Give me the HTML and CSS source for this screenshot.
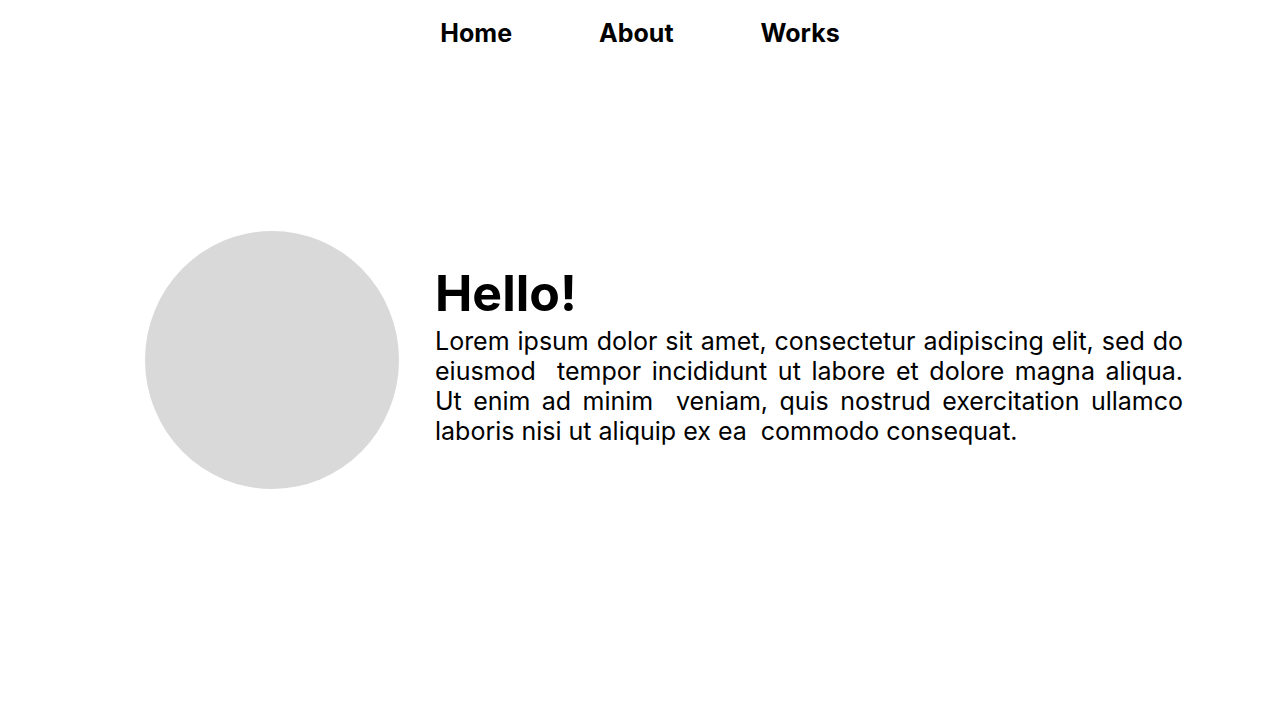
FILE: index.html
```html
<!DOCTYPE html>
<html lang="en">
<head>
<meta charset="utf-8">
<title>Hello</title>
<link rel="stylesheet" href="styles.css">
</head>
<body>
<div class="page">
  <header class="nav">
    <a class="nav-link" href="#">Home</a>
    <a class="nav-link" href="#">About</a>
    <a class="nav-link" href="#">Works</a>
  </header>
  <main class="hero">
    <div class="avatar"></div>
    <div class="intro">
      <h1 class="title">Hello!</h1>
      <p class="lead">Lorem ipsum dolor sit amet, consectetur adipiscing elit, sed do eiusmod  tempor incididunt ut labore et dolore magna aliqua. Ut enim ad minim  veniam, quis nostrud exercitation ullamco laboris nisi ut aliquip ex ea  commodo consequat.</p>
    </div>
  </main>
</div>
</body>
</html>
```
FILE: styles.css
```css
html, body {
  margin: 0;
  padding: 0;
  background: #ffffff;
}

body {
  font-family: Inter, "Noto Sans", sans-serif;
  color: #000000;
}

.page {
  height: 720px;
  display: flex;
  flex-direction: column;
}

.nav {
  height: 66px;
  display: flex;
  justify-content: center;
  align-items: flex-start;
  gap: 87px;
  padding-top: 17px;
  box-sizing: border-box;
}

.nav-link {
  font-size: 25px;
  font-weight: 700;
  color: #000000;
  text-decoration: none;
  line-height: 32px;
}

.hero {
  flex: 1;
  display: flex;
  align-items: center;
  gap: 36px;
  padding: 0 97px 66px 145px;
}

.avatar {
  flex: none;
  width: 254px;
  height: 258px;
  border-radius: 50%;
  background: #d9d9d9;
}

.intro {
  flex: 1;
  padding-bottom: 14px;
}

.title {
  margin: 0;
  font-size: 50px;
  font-weight: 700;
  line-height: 65px;
}

.lead {
  margin: 0;
  font-size: 25px;
  line-height: 30px;
  text-align: justify;
  white-space: pre-wrap;
}
```
